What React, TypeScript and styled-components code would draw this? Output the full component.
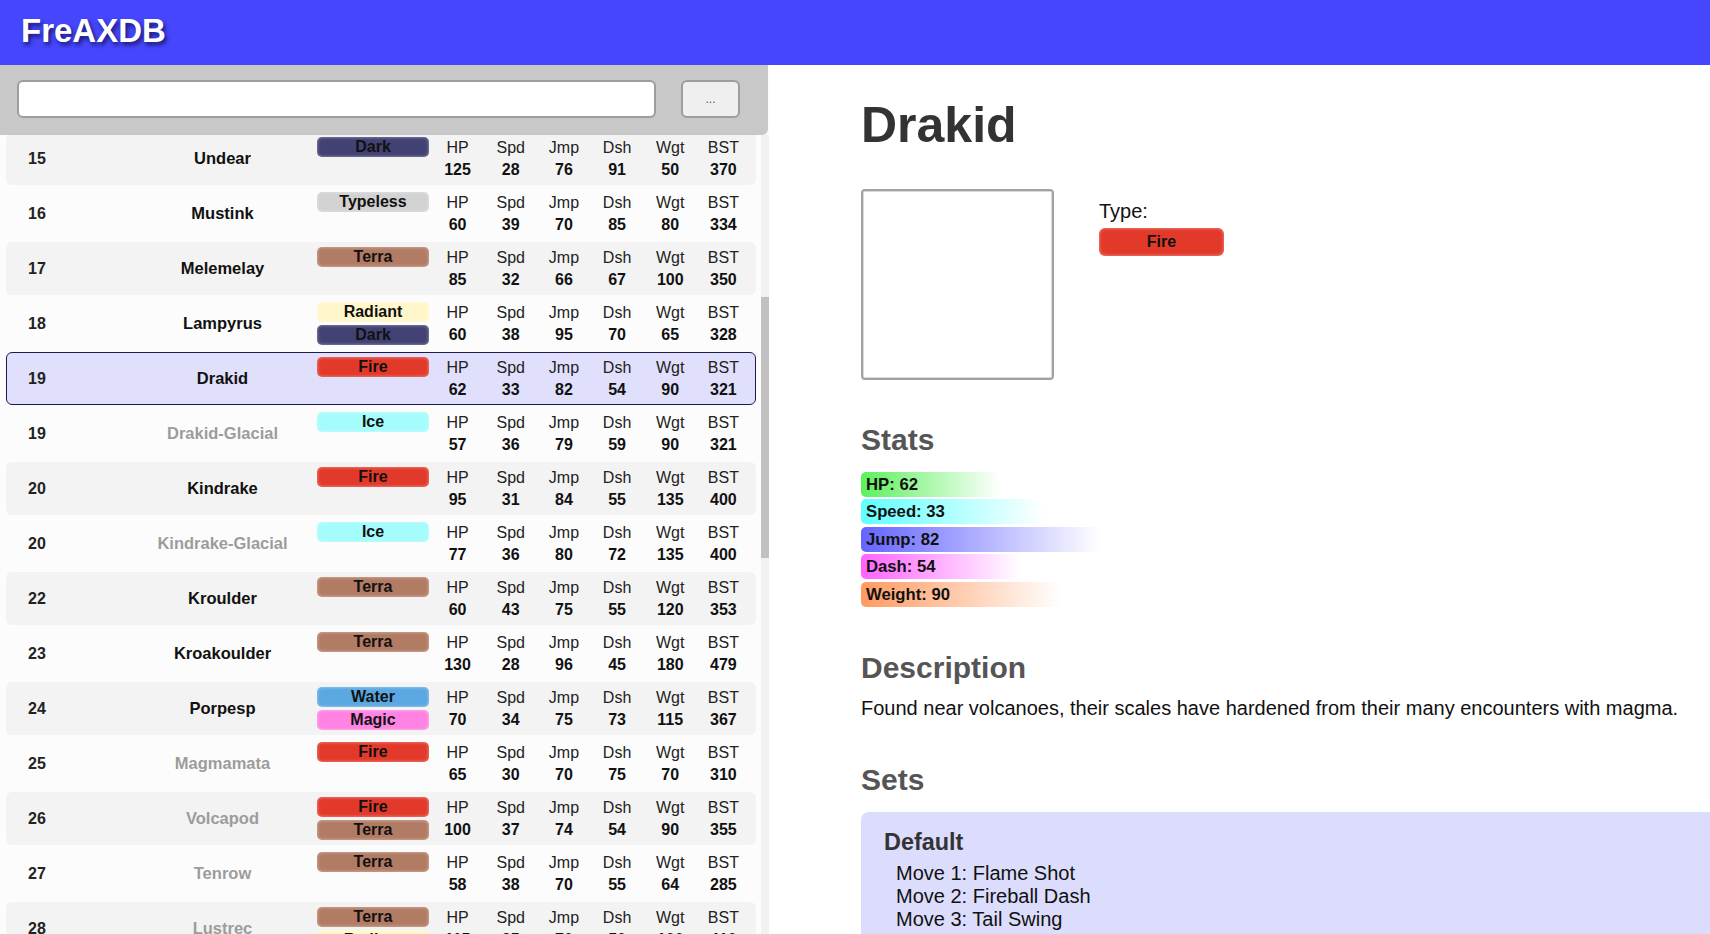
import React, { useLayoutEffect, useRef, useState } from 'react';
import styled, { createGlobalStyle } from 'styled-components';

const GlobalStyle = createGlobalStyle`
  html, body { margin: 0; padding: 0; height: 100%; overflow: hidden; }
  body {
    font-family: "Liberation Sans", Arial, Helvetica, sans-serif;
    color: #111;
    background: #fff;
  }
  #root { height: 100%; }
  * { box-sizing: border-box; }
`;

type TypeName = 'Dark' | 'Typeless' | 'Terra' | 'Radiant' | 'Fire' | 'Ice' | 'Water' | 'Magic';

const TYPE_COLORS: Record<TypeName, string> = {
  Dark: '#414173',
  Typeless: '#d2d2d2',
  Terra: '#b27b63',
  Radiant: '#fff7c9',
  Fire: '#e2392a',
  Ice: '#a4fcfc',
  Water: '#5aa7e2',
  Magic: '#ff83e2',
};

type Stats = [number, number, number, number, number, number];

interface Mon {
  no: number;
  name: string;
  types: TypeName[];
  stats: Stats;
  faded?: boolean;
  selected?: boolean;
}

const m = (no: number, name: string, types: TypeName[], stats: Stats, faded = false, selected = false): Mon => ({
  no, name, types, stats, faded, selected,
});

const MONS: Mon[] = [
  m(1, 'Pebblit', ['Terra'], [70, 30, 60, 50, 90, 300]),
  m(2, 'Bouldrin', ['Terra'], [95, 28, 72, 48, 140, 383]),
  m(4, 'Flickit', ['Fire'], [55, 40, 68, 60, 45, 268]),
  m(5, 'Splashel', ['Water'], [65, 35, 70, 62, 60, 292]),
  m(7, 'Glimmer', ['Radiant'], [60, 38, 74, 66, 40, 278]),
  m(9, 'Hexling', ['Magic'], [58, 36, 80, 64, 55, 293]),
  m(11, 'Frostub', ['Ice'], [72, 30, 66, 58, 85, 311]),
  m(12, 'Shadewing', ['Dark'], [68, 41, 88, 70, 60, 327]),
  m(14, 'Blankit', ['Typeless'], [80, 33, 70, 60, 75, 318]),
  m(15, 'Undear', ['Dark'], [125, 28, 76, 91, 50, 370]),
  m(16, 'Mustink', ['Typeless'], [60, 39, 70, 85, 80, 334]),
  m(17, 'Melemelay', ['Terra'], [85, 32, 66, 67, 100, 350]),
  m(18, 'Lampyrus', ['Radiant', 'Dark'], [60, 38, 95, 70, 65, 328]),
  m(19, 'Drakid', ['Fire'], [62, 33, 82, 54, 90, 321], false, true),
  m(19, 'Drakid-Glacial', ['Ice'], [57, 36, 79, 59, 90, 321], true),
  m(20, 'Kindrake', ['Fire'], [95, 31, 84, 55, 135, 400]),
  m(20, 'Kindrake-Glacial', ['Ice'], [77, 36, 80, 72, 135, 400], true),
  m(22, 'Kroulder', ['Terra'], [60, 43, 75, 55, 120, 353]),
  m(23, 'Kroakoulder', ['Terra'], [130, 28, 96, 45, 180, 479]),
  m(24, 'Porpesp', ['Water', 'Magic'], [70, 34, 75, 73, 115, 367]),
  m(25, 'Magmamata', ['Fire'], [65, 30, 70, 75, 70, 310], true),
  m(26, 'Volcapod', ['Fire', 'Terra'], [100, 37, 74, 54, 90, 355], true),
  m(27, 'Tenrow', ['Terra'], [58, 38, 70, 55, 64, 285], true),
  m(28, 'Lustrec', ['Terra', 'Radiant'], [115, 35, 70, 50, 100, 410], true),
  m(29, 'Glowmoth', ['Radiant'], [64, 40, 86, 68, 45, 303], true),
  m(30, 'Tidalisk', ['Water'], [90, 32, 72, 60, 110, 364], true),
  m(31, 'Cindermaw', ['Fire', 'Dark'], [88, 35, 78, 66, 120, 387], true),
  m(32, 'Hailbeak', ['Ice'], [62, 42, 90, 74, 55, 323], true),
  m(33, 'Mystoad', ['Magic'], [75, 29, 82, 52, 95, 333], true),
  m(34, 'Duskrat', ['Dark'], [54, 44, 70, 80, 40, 288], true),
  m(35, 'Plainbit', ['Typeless'], [66, 36, 68, 62, 70, 302], true),
  m(36, 'Rubblor', ['Terra'], [110, 26, 64, 46, 160, 406], true),
  m(37, 'Brinefin', ['Water', 'Ice'], [72, 38, 76, 70, 85, 341], true),
  m(38, 'Sparkling', ['Radiant', 'Magic'], [58, 41, 84, 72, 45, 300], true),
  m(39, 'Emberling', ['Fire'], [60, 37, 74, 64, 60, 295], true),
  m(40, 'Gloomcap', ['Dark', 'Terra'], [84, 30, 70, 55, 105, 344], true),
  m(41, 'Frostfang', ['Ice', 'Dark'], [78, 40, 88, 76, 90, 372], true),
  m(42, 'Wavelet', ['Water'], [56, 39, 72, 68, 50, 285], true),
  m(43, 'Arcanix', ['Magic'], [70, 35, 92, 70, 75, 342], true),
  m(44, 'Nullpup', ['Typeless'], [74, 34, 70, 60, 80, 318], true),
  m(45, 'Magmole', ['Fire', 'Terra'], [96, 30, 68, 50, 130, 374], true),
  m(46, 'Lumiwing', ['Radiant'], [66, 43, 94, 78, 50, 331], true),
  m(47, 'Shellsea', ['Water', 'Terra'], [104, 27, 66, 44, 150, 391], true),
  m(48, 'Voidrake', ['Dark', 'Fire'], [92, 38, 90, 72, 140, 432], true),
];

const STAT_LABELS = ['HP', 'Spd', 'Jmp', 'Dsh', 'Wgt', 'BST'];

const STAT_BARS = [
  { label: 'HP', value: 62, color: '#5cf05c', width: 140 },
  { label: 'Speed', value: 33, color: '#60ffff', width: 184 },
  { label: 'Jump', value: 82, color: '#6464ff', width: 240 },
  { label: 'Dash', value: 54, color: '#ff62ff', width: 160 },
  { label: 'Weight', value: 90, color: '#ff9a60', width: 200 },
];

const MOVES = ['Flame Shot', 'Fireball Dash', 'Tail Swing'];

/* ---------- layout ---------- */

const Page = styled.div`
  height: 100vh;
  display: flex;
  flex-direction: column;
`;

const TopBar = styled.header`
  flex: 0 0 65px;
  display: flex;
  align-items: center;
  padding: 0 0 4px 21px;
  background: #4646ff;
`;

const Brand = styled.h1`
  margin: 0;
  font-size: 33px;
  font-weight: bold;
  color: #fff;
  text-shadow: 2px 3px 4px rgba(0, 0, 30, 0.65);
`;

const Body = styled.div`
  flex: 1;
  min-height: 0;
  display: flex;
`;

const Sidebar = styled.aside`
  flex: 0 0 769px;
  display: flex;
  flex-direction: column;
  min-height: 0;
  background: #fcfcfc;
`;

const SearchBar = styled.div`
  flex: 0 0 70px;
  margin-right: 1px;
  display: flex;
  align-items: center;
  gap: 25px;
  padding: 0 28px 2px 17px;
  background: #c8c8c8;
  border-bottom-right-radius: 6px;
`;

const SearchInput = styled.input`
  flex: 1;
  height: 38px;
  border: 2px solid #9d9d9d;
  border-radius: 6px;
  background: #fff;
  outline: none;
  font-family: inherit;
  font-size: 16px;
`;

const MoreButton = styled.button`
  flex: 0 0 59px;
  height: 38px;
  border: 2px solid #9d9d9d;
  border-radius: 6px;
  background: #efefef;
  color: #555;
  font-family: inherit;
  font-size: 12px;
  padding: 0;
`;

const ListArea = styled.div`
  flex: 1;
  min-height: 0;
  display: flex;
`;

const List = styled.div`
  flex: 1;
  min-width: 0;
  overflow-y: auto;
  scrollbar-width: none;
  padding: 0 5px 30px 6px;
  &::-webkit-scrollbar { display: none; }
`;

const ScrollTrack = styled.div`
  flex: 0 0 8px;
  position: relative;
  background: #f1f1f1;
`;

const ScrollThumb = styled.div`
  position: absolute;
  left: 0;
  right: 0;
  background: #c1c1c1;
`;

const Row = styled.div<{ $alt: boolean; $selected: boolean }>`
  display: grid;
  grid-template-columns: 122px 187px 115px repeat(6, 1fr);
  height: 53px;
  margin-bottom: 2px;
  padding-right: 5px;
  border-radius: 6px;
  border: 1px solid ${(p) => (p.$selected ? '#1c1c4e' : 'transparent')};
  background: ${(p) => (p.$selected ? '#e0e0fc' : p.$alt ? '#f3f3f3' : 'transparent')};
`;

const Num = styled.div`
  align-self: center;
  padding-left: 21px;
  font-size: 16px;
  font-weight: bold;
  color: #222;
`;

const Name = styled.div<{ $faded: boolean }>`
  align-self: center;
  text-align: center;
  font-size: 16.5px;
  font-weight: bold;
  color: ${(p) => (p.$faded ? '#9c9c9c' : '#111')};
`;

const TypeStack = styled.div`
  display: flex;
  flex-direction: column;
  gap: 3px;
  padding: 4px 0 0 1px;
`;

const TypeBadge = styled.div<{ $type: TypeName; $big?: boolean }>`
  width: ${(p) => (p.$big ? '125px' : '112px')};
  height: ${(p) => (p.$big ? '28px' : '20px')};
  line-height: ${(p) => (p.$big ? '28px' : '20px')};
  border-radius: ${(p) => (p.$big ? '6px' : '5px')};
  background: ${(p) => TYPE_COLORS[p.$type]};
  box-shadow: inset 0 0 3px 1px rgba(255, 255, 255, 0.3);
  text-align: center;
  font-size: 16px;
  font-weight: bold;
  color: #111;
`;

const StatCell = styled.div`
  display: flex;
  flex-direction: column;
  align-items: center;
  padding-top: 3.5px;
  font-size: 16px;
  line-height: 22px;
`;

const StatLabel = styled.span`
  color: #222;
`;

const StatValue = styled.span`
  font-weight: bold;
  color: #111;
`;

/* ---------- detail ---------- */

const Detail = styled.main`
  flex: 1;
  min-width: 0;
  overflow: hidden;
  padding-left: 92px;
  background: #fff;
`;

const MonTitle = styled.h1`
  margin: 31px 0 34.5px;
  font-size: 50px;
  font-weight: bold;
  color: #333;
`;

const Profile = styled.div`
  display: flex;
  gap: 45px;
`;

const Portrait = styled.div`
  width: 193px;
  height: 191px;
  border: 2px solid #a2a2a2;
  border-radius: 4px;
  box-shadow: inset 0 0 0 1px #dadada;
  background: #fff;
`;

const TypeInfo = styled.div`
  padding-top: 11px;
  display: flex;
  flex-direction: column;
  gap: 5px;
`;

const TypeLabel = styled.div`
  font-size: 20px;
  color: #111;
`;

const SectionTitle = styled.h2<{ $top: number; $bottom: number }>`
  margin: ${(p) => p.$top}px 0 ${(p) => p.$bottom}px;
  font-size: 30px;
  font-weight: bold;
  color: #555;
`;

const Bars = styled.div`
  display: flex;
  flex-direction: column;
  gap: 2.5px;
`;

const Bar = styled.div<{ $color: string; $w: number }>`
  width: ${(p) => p.$w}px;
  height: 25px;
  line-height: 25px;
  padding-left: 5px;
  border-radius: 5px;
  background: linear-gradient(to right, ${(p) => p.$color}, rgba(255, 255, 255, 0));
  font-size: 16.7px;
  font-weight: bold;
  color: #111;
  white-space: nowrap;
`;

const Paragraph = styled.p`
  margin: 0;
  font-size: 20px;
  color: #111;
  white-space: nowrap;
`;

const SetCard = styled.section`
  margin-right: -20px;
  padding: 17px 23px 20px;
  border-radius: 8px;
  background: #dcdcfc;
`;

const SetName = styled.h3`
  margin: 0 0 6px;
  font-size: 23.4px;
  font-weight: bold;
  color: #333;
`;

const MoveList = styled.ul`
  margin: 0;
  padding-left: 12px;
  list-style: none;
  font-size: 20px;
  line-height: 23px;
  color: #111;
`;

export default function App() {
  const listRef = useRef<HTMLDivElement>(null);
  const [thumb, setThumb] = useState({ top: 0, height: 0 });

  const measure = () => {
    const el = listRef.current;
    if (!el) return;
    const track = el.clientHeight;
    setThumb({
      top: (el.scrollTop / el.scrollHeight) * track,
      height: (el.clientHeight / el.scrollHeight) * track,
    });
  };

  useLayoutEffect(() => {
    if (listRef.current) listRef.current.scrollTop = 498;
    measure();
  }, []);

  return (
    <>
      <GlobalStyle />
      <Page>
        <TopBar>
          <Brand>FreAXDB</Brand>
        </TopBar>
        <Body>
          <Sidebar>
            <SearchBar>
              <SearchInput type="text" />
              <MoreButton>...</MoreButton>
            </SearchBar>
            <ListArea>
              <List ref={listRef} onScroll={measure}>
                {MONS.map((mon, i) => (
                  <Row key={`${mon.no}-${mon.name}`} $alt={i % 2 === 1} $selected={!!mon.selected}>
                    <Num>{mon.no}</Num>
                    <Name $faded={!!mon.faded}>{mon.name}</Name>
                    <TypeStack>
                      {mon.types.map((t) => (
                        <TypeBadge key={t} $type={t}>{t}</TypeBadge>
                      ))}
                    </TypeStack>
                    {mon.stats.map((v, k) => (
                      <StatCell key={STAT_LABELS[k]}>
                        <StatLabel>{STAT_LABELS[k]}</StatLabel>
                        <StatValue>{v}</StatValue>
                      </StatCell>
                    ))}
                  </Row>
                ))}
              </List>
              <ScrollTrack>
                <ScrollThumb style={{ top: thumb.top, height: thumb.height }} />
              </ScrollTrack>
            </ListArea>
          </Sidebar>
          <Detail>
            <MonTitle>Drakid</MonTitle>
            <Profile>
              <Portrait />
              <TypeInfo>
                <TypeLabel>Type:</TypeLabel>
                <TypeBadge $type="Fire" $big>Fire</TypeBadge>
              </TypeInfo>
            </Profile>
            <SectionTitle $top={43} $bottom={15}>Stats</SectionTitle>
            <Bars>
              {STAT_BARS.map((b) => (
                <Bar key={b.label} $color={b.color} $w={b.width}>
                  {b.label}: {b.value}
                </Bar>
              ))}
            </Bars>
            <SectionTitle $top={44} $bottom={12}>Description</SectionTitle>
            <Paragraph>
              Found near volcanoes, their scales have hardened from their many encounters with magma.
            </Paragraph>
            <SectionTitle $top={43} $bottom={15}>Sets</SectionTitle>
            <SetCard>
              <SetName>Default</SetName>
              <MoveList>
                {MOVES.map((mv, i) => (
                  <li key={mv}>Move {i + 1}: {mv}</li>
                ))}
              </MoveList>
            </SetCard>
          </Detail>
        </Body>
      </Page>
    </>
  );
}
